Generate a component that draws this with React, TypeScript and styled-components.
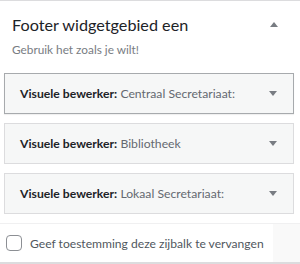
import React from "react";
import styled, { createGlobalStyle } from "styled-components";

const GlobalStyle = createGlobalStyle`
  html, body {
    margin: 0;
    padding: 0;
    background: #ffffff;
  }
  body {
    font-family: Lato, "Noto Sans", Arial, sans-serif;
    -webkit-font-smoothing: antialiased;
  }
`;

const Panel = styled.div`
  width: 300px;
  height: 264px;
  box-sizing: border-box;
  border-top: 1px solid #dcdcde;
  border-bottom: 2px solid #dcdcde;
  background: #ffffff;
  display: flex;
  flex-direction: column;
`;

const Header = styled.div`
  display: flex;
  flex-direction: column;
  padding: 13px 12px 0 12px;
`;

const TitleRow = styled.div`
  display: flex;
  align-items: center;
  justify-content: space-between;
  height: 20px;
`;

const Title = styled.h3`
  margin: 0;
  font-size: 16.2px;
  font-weight: 400;
  color: #1d2327;
`;

const Description = styled.p`
  margin: 8px 0 0 0;
  font-size: 11.8px;
  color: #787c82;
  line-height: 16px;
`;

const Arrow = styled.span<{ up?: boolean }>`
  width: 0;
  height: 0;
  border-left: 4px solid transparent;
  border-right: 4px solid transparent;
  ${({ up }) =>
    up ? "border-bottom: 5px solid #787c82;" : "border-top: 5px solid #787c82;"}
  margin-right: ${({ up }) => (up ? "10px" : "0")};
`;

const WidgetList = styled.div`
  display: flex;
  flex-direction: column;
  gap: 9px;
  padding: 15px 6px 0 4px;
`;

const Widget = styled.div<{ active?: boolean }>`
  height: 41px;
  box-sizing: border-box;
  border: 1px solid ${({ active }) => (active ? "#a7aaad" : "#dcdcde")};
  background: #f6f7f7;
  display: flex;
  align-items: center;
  justify-content: space-between;
  padding: 0 16px 0 15px;
  box-shadow: ${({ active }) => (active ? "0 1px 1px rgba(0,0,0,0.06)" : "none")};
`;

const WidgetTitle = styled.div`
  font-size: 12.2px;
  color: #646970;
  white-space: nowrap;

  strong {
    font-weight: 700;
    color: #1d2327;
  }
`;

const Footer = styled.div`
  margin-top: auto;
  height: 38px;
  border-top: 1px solid #f0f0f1;
  display: flex;
`;

const Option = styled.label`
  flex: 1;
  display: flex;
  align-items: center;
  gap: 8px;
  padding-left: 6px;
  font-size: 12.1px;
  color: #50575e;
  background: #ffffff;
  white-space: nowrap;
`;

const Filler = styled.div`
  width: 27px;
  background: #f9f9f9;
`;

const Checkbox = styled.span`
  width: 16px;
  height: 16px;
  box-sizing: border-box;
  border: 1px solid #8c8f94;
  border-radius: 4px;
  background: #ffffff;
  flex-shrink: 0;
`;

const widgets = [
  { name: "Centraal Secretariaat:", active: true },
  { name: "Bibliotheek", active: false },
  { name: "Lokaal Secretariaat:", active: false },
];

export default function App(): React.JSX.Element {
  return (
    <>
      <GlobalStyle />
      <Panel>
        <Header>
          <TitleRow>
            <Title>Footer widgetgebied een</Title>
            <Arrow up />
          </TitleRow>
          <Description>Gebruik het zoals je wilt!</Description>
        </Header>
        <WidgetList>
          {widgets.map((w) => (
            <Widget key={w.name} active={w.active}>
              <WidgetTitle>
                <strong>Visuele bewerker:</strong> {w.name}
              </WidgetTitle>
              <Arrow />
            </Widget>
          ))}
        </WidgetList>
        <Footer>
          <Option>
            <Checkbox />
            Geef toestemming deze zijbalk te vervangen
          </Option>
          <Filler />
        </Footer>
      </Panel>
    </>
  );
}
